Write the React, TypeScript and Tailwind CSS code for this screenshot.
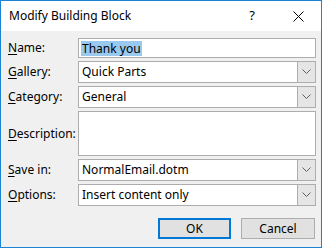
import React from "react";

const font = { fontFamily: '"Segoe UI", "Noto Sans", sans-serif' };

function Label({ text, u }: { text: string; u: number }) {
  return (
    <span className="text-[12px] text-black leading-none">
      {text.slice(0, u)}
      <span className="underline underline-offset-2">{text[u]}</span>
      {text.slice(u + 1)}
    </span>
  );
}

function Chevron() {
  return (
    <svg width="9" height="6" viewBox="0 0 9 6">
      <path d="M0.5 0.5 L4.5 4.5 L8.5 0.5" fill="none" stroke="#606060" strokeWidth="1" />
    </svg>
  );
}

function Combo({ value }: { value: string }) {
  return (
    <div className="flex h-[22px] border border-[#adadad] bg-white">
      <div className="flex-1 flex items-center pl-[3px] text-[12px] text-black">{value}</div>
      <div className="w-[18px] flex items-center justify-center bg-[#e5e5e5] border-l border-[#adadad]">
        <Chevron />
      </div>
    </div>
  );
}

export default function App() {
  return (
    <div
      className="w-[322px] h-[248px] border border-[#1883d7] flex flex-col bg-white"
      style={font}
    >
      <div className="h-[30px] flex items-center bg-white">
        <span className="ml-[8px] text-[12px] text-black flex-1">Modify Building Block</span>
        <span className="text-[13px] text-black w-[46px] text-center">?</span>
        <div className="w-[46px] flex items-center justify-center">
          <svg width="11" height="11" viewBox="0 0 11 11">
            <path d="M0.5 0.5 L10.5 10.5 M10.5 0.5 L0.5 10.5" stroke="#000" strokeWidth="1" />
          </svg>
        </div>
      </div>
      <div className="flex-1 bg-[#f0f0f0] pt-[7px] pl-[7px] pr-[5px] flex flex-col">
        <div className="grid grid-cols-[70px_1fr] gap-y-[3px] items-center">
          <Label text="Name:" u={0} />
          <div className="h-[20px] border border-[#adadad] bg-white flex items-center pl-[2px]">
            <span className="text-[12px] text-black bg-[#99c9ef] px-[1px] leading-[15px]">Thank you</span>
          </div>
          <Label text="Gallery:" u={0} />
          <Combo value="Quick Parts" />
          <Label text="Category:" u={0} />
          <Combo value="General" />
          <Label text="Description:" u={0} />
          <div className="h-[45px] border border-[#adadad] bg-white" />
          <Label text="Save in:" u={0} />
          <Combo value="NormalEmail.dotm" />
          <Label text="Options:" u={0} />
          <Combo value="Insert content only" />
        </div>
        <div className="flex justify-end gap-[10px] mt-[12px] pr-[1px]">
          <button className="w-[73px] h-[21px] border-2 border-[#0078d7] bg-[#e1e1e1] text-[12px] text-black">
            OK
          </button>
          <button className="w-[74px] h-[21px] border border-[#adadad] bg-[#e1e1e1] text-[12px] text-black">
            Cancel
          </button>
        </div>
      </div>
    </div>
  );
}
